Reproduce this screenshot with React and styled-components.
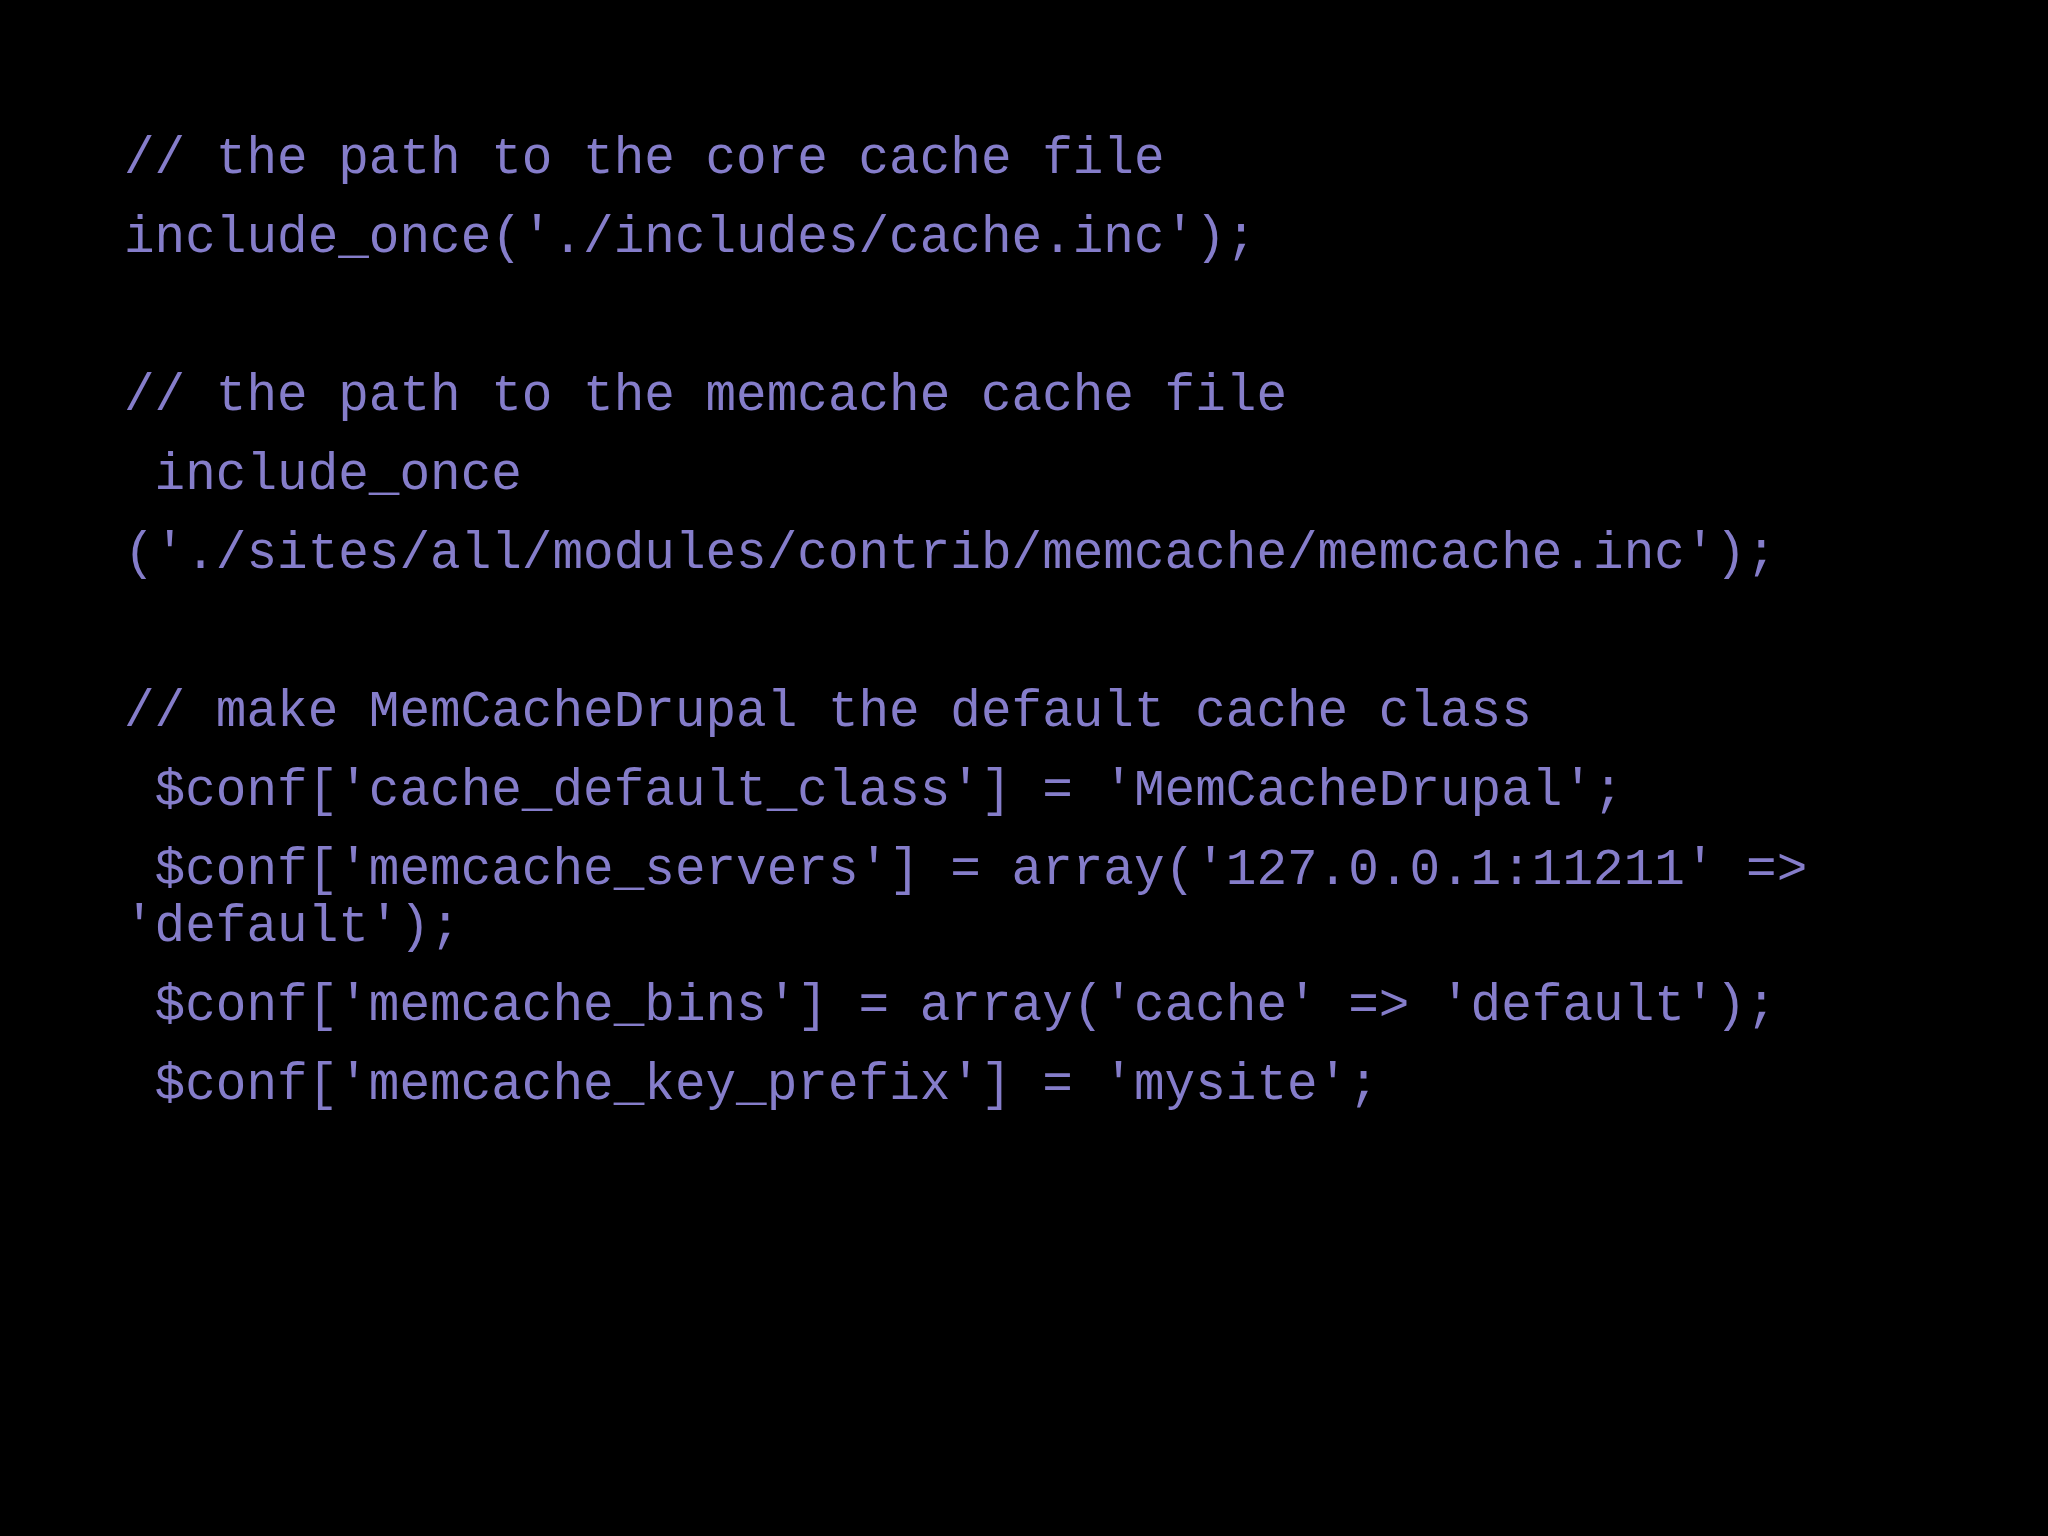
import React from "react";
import styled, { createGlobalStyle } from "styled-components";

const Global = createGlobalStyle`
  html, body {
    margin: 0;
    padding: 0;
    background: #000;
  }
  #root {
    min-height: 100vh;
  }
`;

const Slide = styled.main`
  width: 2048px;
  height: 1536px;
  box-sizing: border-box;
  background: #000;
  padding: 131px 0 0 124px;
  overflow: hidden;
`;

const Code = styled.div`
  display: flex;
  flex-direction: column;
  gap: 22px;
  width: 60ch;
  font-family: "Liberation Mono", "Courier New", monospace;
  font-size: 51px;
  line-height: 57px;
  color: #857dca;
`;

const Line = styled.p`
  margin: 0;
  white-space: pre-wrap;
  min-height: 57px;
`;

const lines = [
  "// the path to the core cache file",
  "include_once('./includes/cache.inc');",
  "",
  "// the path to the memcache cache file",
  " include_once",
  "('./sites/all/modules/contrib/memcache/memcache.inc');",
  "",
  "// make MemCacheDrupal the default cache class",
  " $conf['cache_default_class'] = 'MemCacheDrupal';",
  " $conf['memcache_servers'] = array('127.0.0.1:11211' => 'default');",
  " $conf['memcache_bins'] = array('cache' => 'default');",
  " $conf['memcache_key_prefix'] = 'mysite';",
];

export default function App() {
  return (
    <>
      <Global />
      <Slide>
        <Code>
          {lines.map((l, i) => (
            <Line key={i}>{l}</Line>
          ))}
        </Code>
      </Slide>
    </>
  );
}
